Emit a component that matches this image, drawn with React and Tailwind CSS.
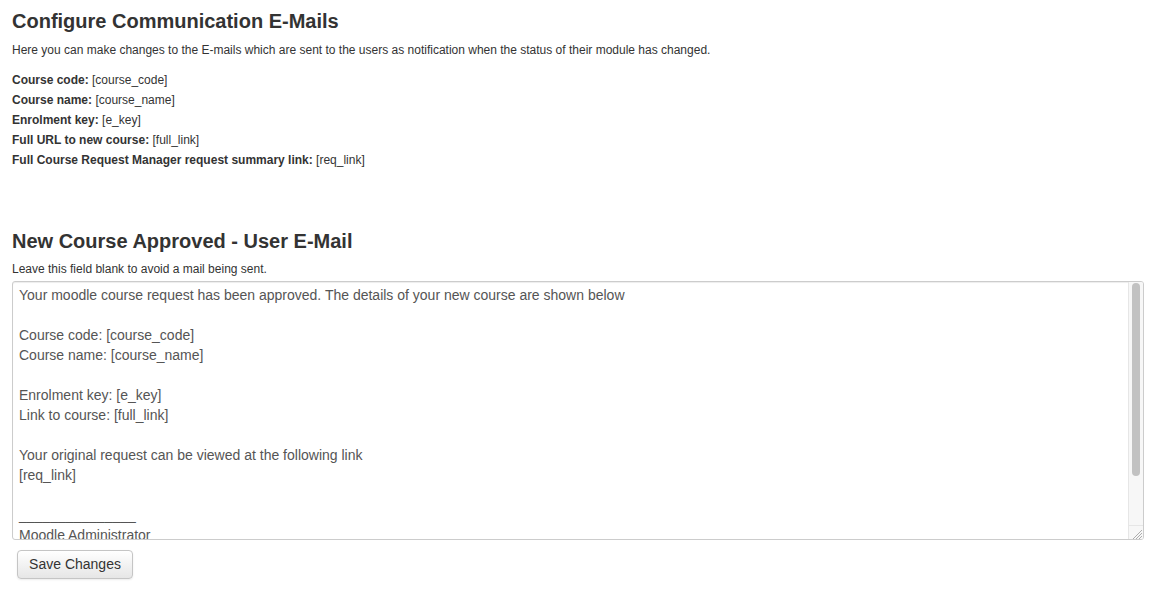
import React from "react";

const font = { fontFamily: '"Liberation Sans", Arial, sans-serif' };

function Row({ label, value }) {
  return (
    <div className="h-5 leading-5">
      <span className="font-bold">{label}</span> {value}
    </div>
  );
}

export default function App() {
  const lines = [
    "Your moodle course request has been approved. The details of your new course are shown below",
    "",
    "Course code: [course_code]",
    "Course name: [course_name]",
    "",
    "Enrolment key: [e_key]",
    "Link to course: [full_link]",
    "",
    "Your original request can be viewed at the following link",
    "[req_link]",
    "",
    "_______________",
    "Moodle Administrator",
  ];
  return (
    <div className="w-[1165px] h-[594px] bg-white text-[#333] px-3 pt-[10px] overflow-hidden" style={font}>
      <h1 className="text-[20px] leading-[22px] font-bold">Configure Communication E-Mails</h1>
      <p className="text-[12px] leading-5 mt-[8px]">
        Here you can make changes to the E-mails which are sent to the users as notification when the status of their module has changed.
      </p>
      <div className="text-[12px] mt-[10px]">
        <Row label="Course code:" value="[course_code]" />
        <Row label="Course name:" value="[course_name]" />
        <Row label="Enrolment key:" value="[e_key]" />
        <Row label="Full URL to new course:" value="[full_link]" />
        <Row label="Full Course Request Manager request summary link:" value="[req_link]" />
      </div>
      <h2 className="text-[20px] leading-[22px] font-bold mt-[60px]">New Course Approved - User E-Mail</h2>
      <p className="text-[12px] leading-5 mt-[7px]">Leave this field blank to avoid a mail being sent.</p>
      <div className="relative mt-[2px] w-[1132px] h-[259px] border border-[#cccccc] rounded-[3px] bg-white overflow-hidden shadow-[inset_0_1px_1px_rgba(0,0,0,0.075)]">
        <div className="pl-[6px] pr-[24px] pt-[3px] text-[14px] leading-5 text-[#555]">
          {lines.map((l, i) => (
            <div key={i} className="h-5 whitespace-pre">{l}</div>
          ))}
        </div>
        <div className="absolute top-0 right-0 bottom-0 w-[15px] bg-[#f7f7f7] border-l border-[#e6e6e6]">
          <div className="absolute left-[3px] top-[1px] w-[8px] h-[193px] rounded-full bg-[#c2c2c2]" />
          <div className="absolute left-0 bottom-0 w-[15px] h-[14px] bg-[#f7f7f7] border-t border-[#e6e6e6]">
            <svg width="15" height="14" viewBox="0 0 15 14" className="absolute left-0 top-0">
              <line x1="4" y1="13" x2="13" y2="4" stroke="#999" strokeWidth="0.8" />
              <line x1="7" y1="13" x2="13" y2="7" stroke="#999" strokeWidth="0.8" />
              <line x1="10" y1="13" x2="13" y2="10" stroke="#999" strokeWidth="0.8" />
            </svg>
          </div>
        </div>
      </div>
      <button className="mt-[10px] ml-[5px] w-[116px] h-[29px] leading-[27px] text-[14px] text-[#333] border border-[#c5c5c5] rounded-[4px] bg-gradient-to-b from-white to-[#e6e6e6] shadow-[0_1px_2px_rgba(0,0,0,0.08)]">
        Save Changes
      </button>
    </div>
  );
}
